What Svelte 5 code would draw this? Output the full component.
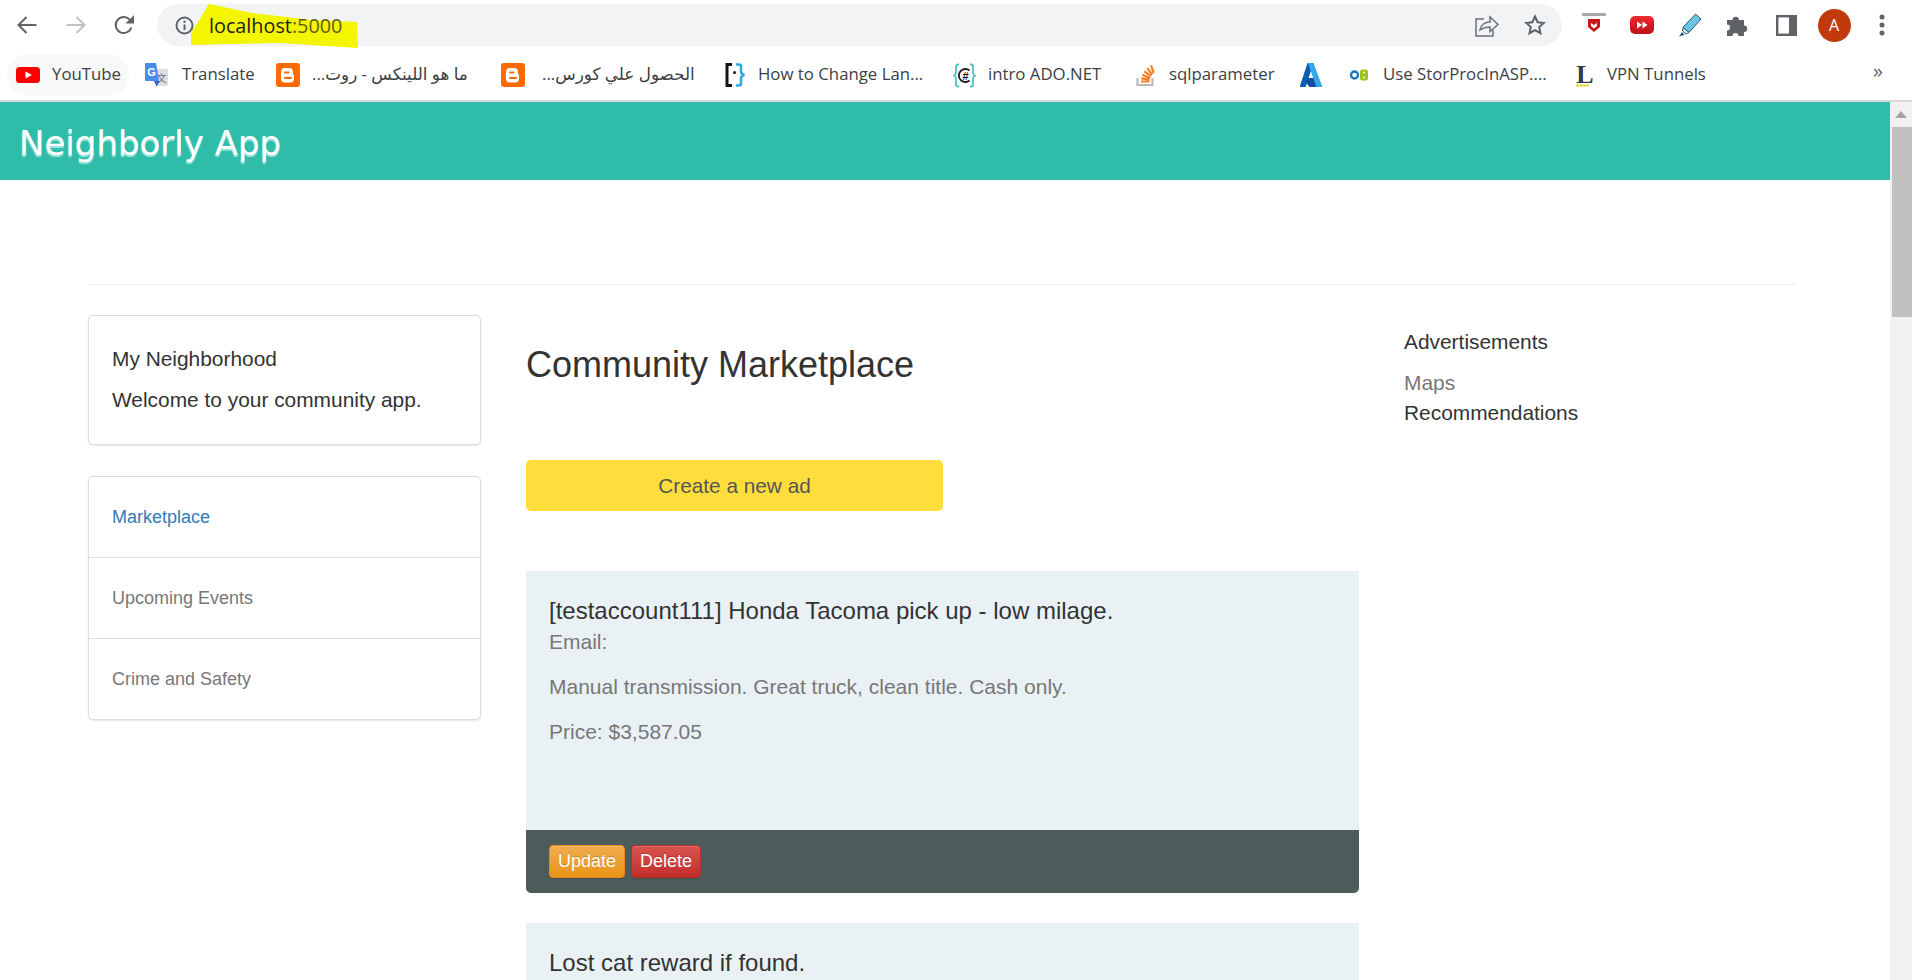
<script>
	const bookmarks = [
		{ icon: 'yt', label: 'YouTube', w: 129, gap: 12 },
		{ icon: 'translate', label: 'Translate', w: 131, gap: 14 },
		{ icon: 'blogger', label: 'ما هو اللينكس - روت...', w: 225, gap: 12 },
		{ icon: 'blogger', label: 'الحصول علي كورس...', w: 224, gap: 17 },
		{ icon: 'bracket', label: 'How to Change Lan...', w: 228, gap: 12 },
		{ icon: 'csharp', label: 'intro ADO.NET', w: 183, gap: 12 },
		{ icon: 'so', label: 'sqlparameter', w: 164, gap: 13 },
		{ icon: 'azure', label: '', w: 50, gap: 0 },
		{ icon: 'ob', label: 'Use StorProcInASP....', w: 225, gap: 15 },
		{ icon: 'lfav', label: 'VPN Tunnels', w: 280, gap: 12 }
	];

	const ads = [
		{
			title: '[testaccount111] Honda Tacoma pick up - low milage.',
			desc: 'Manual transmission. Great truck, clean title. Cash only.',
			price: 'Price: $3,587.05'
		},
		{
			title: 'Lost cat reward if found.',
			desc: '',
			price: ''
		}
	];
</script>

{#snippet favicon(name)}
	{#if name === 'yt'}
		<svg width="24" height="16" viewBox="0 0 24 16"><rect width="24" height="16" rx="3.5" fill="#f00" /><path d="M9.5 4.5 16 8l-6.5 3.5z" fill="#fff" /></svg>
	{:else if name === 'translate'}
		<svg width="23" height="24" viewBox="0 0 23 24">
			<path d="M10 6h12a1 1 0 0 1 1 1v15a1 1 0 0 1-1 1H11z" fill="#dcdfe2" />
			<text x="16.5" y="19" font-size="10" fill="#6b7075" text-anchor="middle" font-family="Noto Sans CJK SC, sans-serif">文</text>
			<path d="M1 0h10l3 18H1a1 1 0 0 1-1-1V1a1 1 0 0 1 1-1z" fill="#4a8af4" />
			<path d="M9 18h6l-3.5 5.500z" fill="#3367c9" />
			<text x="6.500" y="13" font-size="11" font-weight="700" fill="#fff" text-anchor="middle" font-family="Liberation Sans, sans-serif">G</text>
		</svg>
	{:else if name === 'blogger'}
		<svg width="24" height="24" viewBox="0 0 24 24">
			<rect width="24" height="24" rx="3" fill="#ff6a00" />
			<path d="M9 5h4a4 4 0 0 1 4 4v1.500a2 2 0 0 0 1 1.500v3.500a4 4 0 0 1-4 4H9a4 4 0 0 1-4-4V9a4 4 0 0 1 4-4z" fill="#fff" />
			<path d="M9 9.500h3.500M9 15h6" stroke="#ff6a00" stroke-width="2" stroke-linecap="round" />
		</svg>
	{:else if name === 'bracket'}
		<svg width="21" height="24" viewBox="0 0 21 24" fill="none">
			<path d="M7 1.500H2v21h5" stroke="#151515" stroke-width="3" />
			<path d="M11 1.500h3a2 2 0 0 1 2 2v5c0 2 1 3 3.500 3.500-2.500.5-3.500 1.500-3.500 3.500v5a2 2 0 0 1-2 2h-3" stroke="#2ba8e0" stroke-width="2.500" />
			<circle cx="9.500" cy="9.500" r="1.500" fill="#151515" />
		</svg>
	{:else if name === 'csharp'}
		<svg width="23" height="25" viewBox="0 0 23 25" fill="none">
			<path d="M6 1.500H5a2 2 0 0 0-2 2v6c0 1.500-1 2.500-2 3 1 .5 2 1.500 2 3v6a2 2 0 0 0 2 2h1M17 1.500h1a2 2 0 0 1 2 2v6c0 1.500 1 2.500 2 3-1 .5-2 1.500-2 3v6a2 2 0 0 1-2 2h-1" stroke="#4cc0c9" stroke-width="1.800" />
			<path d="M16.500 7.500a6.500 6.500 0 1 0 0 10" stroke="#1c1c1c" stroke-width="1.800" />
			<text x="12.500" y="16.500" font-size="11" font-weight="700" fill="#1c1c1c" text-anchor="middle" font-family="Liberation Sans, sans-serif">#</text>
		</svg>
	{:else if name === 'so'}
		<svg width="20" height="24" viewBox="0 0 20 24" fill="none">
			<path d="M1.500 15v7h15v-7" stroke="#bcbbbb" stroke-width="2.200" />
			<path d="M5 18.500h8.500M5.300 15.300l8.300 1.300M6.300 11.800l7.800 3.200M8.300 8.400l6.800 4.800M11.300 5.200l5 6.300M15 2.300l2.800 7.600" stroke="#f48024" stroke-width="2.200" />
		</svg>
	{:else if name === 'azure'}
		<svg width="22" height="24" viewBox="0 0 22 24">
			<path d="M7.500 0h6L6 23a1 1 0 0 1-1 1H1a1 1 0 0 1-1-1.300z" fill="#0a5fb4" />
			<path d="M16 15H7l-1.500 4 4 5H19z" fill="#0f4f9f" />
			<path d="M13.500 0 22 22.700a1 1 0 0 1-1 1.300h-6a1 1 0 0 0 1-1.300L8 0z" fill="#35a7ea" />
		</svg>
	{:else if name === 'ob'}
		<svg width="18" height="12" viewBox="0 0 18 12">
			<circle cx="4.500" cy="6" r="3.500" fill="none" stroke="#1976c2" stroke-width="2.400" />
			<rect x="10" y="0.500" width="8" height="11" rx="2.500" fill="#9dc41a" />
			<path d="M13 3.500h2M13 8.500h2" stroke="#fff" stroke-width="1.400" />
		</svg>
	{:else if name === 'lfav'}
		<svg width="20" height="24" viewBox="0 0 20 24">
			<text x="10" y="20" font-size="26" font-weight="700" fill="#2f3e46" text-anchor="middle" font-family="Liberation Serif, serif">L</text>
			<rect x="1" y="21.500" width="13" height="2" fill="#e8d83a" />
		</svg>
	{/if}
{/snippet}

<div class="page">
	<header class="chrome">
		<div class="toolbar">
			<div class="btns">
				<span class="tb">
					<svg width="20" height="18" viewBox="0 0 20 18" fill="none" stroke="#5f6368" stroke-width="2"><path d="M19.500 9H2M9.500 1 1.500 9l8 8" /></svg>
				</span>
				<span class="tb">
					<svg width="20" height="18" viewBox="0 0 20 18" fill="none" stroke="#bdc1c6" stroke-width="2"><path d="M.5 9H18M10.500 1l8 8-8 8" /></svg>
				</span>
				<span class="tb">
					<svg width="21" height="20" viewBox="0 0 21 20" fill="none"><path d="M17.300 12.500a8 8 0 1 1-1.600-7.800" stroke="#5f6368" stroke-width="2" /><path d="M20 0v8.500h-8.500z" fill="#5f6368" /></svg>
				</span>
			</div>

			<div class="omnibox">
				<svg class="marker" width="180" height="46" viewBox="0 0 180 46"><path d="M1 41V29L19 0l43 9 60 7 45 2 1 26-78-5-50 1z" fill="#f4f500" /></svg>
				<svg class="info" width="19" height="19" viewBox="0 0 19 19" fill="none"><circle cx="9.500" cy="9.500" r="8" stroke="#5f6368" stroke-width="2" /><path d="M9.500 8.500v5.500" stroke="#5f6368" stroke-width="2" /><circle cx="9.500" cy="5.700" r="1.200" fill="#5f6368" /></svg>
				<span class="url">localhost<span class="port">:5000</span></span>
				<span class="omni-right">
					<svg width="24" height="23" viewBox="0 0 24 23" fill="none" stroke="#6b6f73" stroke-width="1.500"><path d="M9 5H1v17h17v-6" /><path d="M5 16c1-5 5-8 10-8V3l8 7.500-8 7V13c-4 0-7 1-10 3z" /></svg>
					<svg width="22" height="22" viewBox="0 0 22 22" fill="none" stroke="#5f6368" stroke-width="2"><path d="m11 2.500 2.600 5.700 6.200.7-4.600 4.200 1.300 6.100-5.500-3.100-5.500 3.100 1.300-6.100L2.200 8.900l6.200-.7z" /></svg>
				</span>
			</div>

			<div class="btns ext">
				<span class="tb">
					<svg width="24" height="24" viewBox="0 0 24 24"><rect width="24" height="3" rx="1" fill="#a9a9a9" /><path d="M6 6h12v8l-6 5-6-5z" fill="#c8171d" /><path d="M9 10l3 2 3-2v3l-3 2.500L9 13z" fill="#fff" /></svg>
				</span>
				<span class="tb">
					<svg width="24" height="18" viewBox="0 0 24 18"><defs><linearGradient id="ff" x1="0" y1="0" x2="0" y2="1"><stop offset="0" stop-color="#ee2a2f" /><stop offset="1" stop-color="#bf1016" /></linearGradient></defs><rect width="24" height="18" rx="5" fill="url(#ff)" /><path d="M7 5.500 12 9l-5 3.500zM12.500 5.500 17.500 9l-5 3.500z" fill="#fff" /></svg>
				</span>
				<span class="tb">
					<svg width="24" height="24" viewBox="0 0 24 24"><path d="M17.500 1 23 6 11 19.500l-6-5z" fill="#6cc4e4" stroke="#2b5a70" stroke-width="1" /><path d="M5 14.500l6 5-3 1.500-3.500-3z" fill="#d7ecf4" stroke="#2b5a70" stroke-width="1" /><path d="M4 19 1 23.500l5.500-1.500z" fill="#2b5a70" /></svg>
				</span>
				<span class="tb">
					<svg width="23" height="22" viewBox="0 0 23 22"><path d="M0 6h5.500a3.200 3.200 0 1 1 6.400 0H17v5.500a3.200 3.200 0 1 1 0 6.400V22h-5.500a3 3 0 0 0-6 0H0v-5.500a3 3 0 0 0 0-6z" fill="#5f6368" /></svg>
				</span>
				<span class="tb">
					<svg width="21" height="21" viewBox="0 0 21 21"><rect x="1.200" y="1.200" width="18.600" height="18.600" fill="none" stroke="#5f6368" stroke-width="2.400" /><rect x="13" y="1" width="7" height="19" fill="#5f6368" /></svg>
				</span>
				<span class="tb"><span class="avatar">A</span></span>
				<span class="tb">
					<svg width="6" height="22" viewBox="0 0 6 22" fill="#5f6368"><circle cx="3" cy="3" r="2.500" /><circle cx="3" cy="11" r="2.500" /><circle cx="3" cy="19" r="2.500" /></svg>
				</span>
			</div>
		</div>

		<nav class="bookmarks">
			{#each bookmarks as b}
				<div class="bookmark" class:pill={b.icon === 'yt'} style="width: {b.w}px; gap: {b.gap}px">
					{@render favicon(b.icon)}
					{#if b.label}<span dir="auto">{b.label}</span>{/if}
				</div>
			{/each}
			<span class="more">»</span>
		</nav>
	</header>

	<div class="viewport">
		<div class="site">
			<div class="banner"><h1>Neighborly App</h1></div>

			<div class="container">
				<hr />
				<div class="columns">
					<aside class="left">
						<div class="card intro">
							<p>My Neighborhood</p>
							<p>Welcome to your community app.</p>
						</div>
						<ul class="card menu">
							<li class="active">Marketplace</li>
							<li>Upcoming Events</li>
							<li>Crime and Safety</li>
						</ul>
					</aside>

					<main class="center">
						<h2>Community Marketplace</h2>
						<div class="create">Create a new ad</div>

						{#each ads as ad, i}
							<article class="ad">
								<div class="ad-body">
									<h3>{ad.title}</h3>
									{#if ad.desc}
										<p class="email">Email:</p>
										<p>{ad.desc}</p>
										<p>{ad.price}</p>
									{/if}
								</div>
								{#if i === 0}
									<div class="ad-foot">
										<span class="btn orange">Update</span>
										<span class="btn red">Delete</span>
									</div>
								{/if}
							</article>
						{/each}
					</main>

					<aside class="right">
						<p class="ads-title">Advertisements</p>
						<p class="muted">Maps</p>
						<p>Recommendations</p>
					</aside>
				</div>
			</div>
		</div>

		<div class="scrollbar">
			<div class="arrow"></div>
			<div class="thumb"></div>
		</div>
	</div>
</div>

<style>
	:global(body) {
		margin: 0;
		background: #fff;
	}

	.page {
		height: 980px;
		overflow: hidden;
		display: flex;
		flex-direction: column;
		font-family: 'Liberation Sans', Arial, sans-serif;
		color: #333;
	}

	.chrome {
		background: #fff;
		flex: none;
	}

	.toolbar {
		height: 50px;
		display: flex;
		align-items: center;
		padding: 0 6px 0 3px;
	}

	.btns {
		display: flex;
		flex: none;
	}

	.tb {
		width: 48.500px;
		height: 40px;
		display: flex;
		align-items: center;
		justify-content: center;
	}

	.ext .tb {
		width: 48px;
	}

	.omnibox {
		flex: 1;
		height: 42px;
		margin: 0 8px 0 8.500px;
		border-radius: 21px;
		background: #f1f3f4;
		position: relative;
		display: flex;
		align-items: center;
		padding: 0 16px 0 18px;
	}

	.marker {
		position: absolute;
		left: 33px;
		top: 0;
		overflow: visible;
	}

	.info,
	.url {
		position: relative;
	}

	.url {
		margin-left: 15px;
		font-family: 'Open Sans', sans-serif;
		font-size: 19.800px;
		color: #202124;
	}

	.port {
		color: #5d6010;
	}

	.omni-right {
		margin-left: auto;
		display: flex;
		align-items: center;
		gap: 25px;
	}

	.avatar {
		width: 33px;
		height: 33px;
		border-radius: 50%;
		background: #c23a0c;
		color: #fff;
		font-family: 'Open Sans', sans-serif;
		font-size: 16px;
		display: flex;
		align-items: center;
		justify-content: center;
	}

	.bookmarks {
		height: 50px;
		border-bottom: 2px solid #d9dadb;
		display: flex;
		align-items: center;
		padding-left: 16px;
		position: relative;
		font-family: 'Open Sans', 'DejaVu Sans', sans-serif;
		font-size: 16.800px;
		color: #3c4043;
	}

	.bookmark {
		flex: none;
		height: 42px;
		display: flex;
		align-items: center;
		white-space: nowrap;
		position: relative;
	}

	.bookmark > span {
		position: relative;
		top: -2px;
	}

	.bookmark :global(svg) {
		flex: none;
		position: relative;
	}

	.pill::before {
		content: '';
		position: absolute;
		left: -9px;
		top: 0;
		width: 122px;
		height: 42px;
		border-radius: 21px;
		background: #f8f9fa;
	}

	.more {
		position: absolute;
		left: 1873px;
		top: 7px;
		font-size: 20px;
		color: #5f6368;
	}

	.viewport {
		flex: 1;
		min-height: 0;
		display: flex;
	}

	.site {
		flex: 1;
		min-width: 0;
	}

	.scrollbar {
		width: 22px;
		flex: none;
		background: #f1f1f1;
	}

	.arrow {
		height: 25px;
		position: relative;
	}

	.arrow::after {
		content: '';
		position: absolute;
		left: 5px;
		top: 9px;
		border: 6px solid transparent;
		border-top: 0;
		border-bottom: 7px solid #a3a3a3;
	}

	.thumb {
		height: 190px;
		margin-left: 2px;
		background: #c1c1c1;
	}

	.banner {
		height: 78px;
		background: #2fbdaa;
		display: flex;
		align-items: center;
		padding: 3px 0 0 19px;
		box-sizing: border-box;
	}

	h1 {
		margin: 0;
		font-family: 'DejaVu Sans', sans-serif;
		font-weight: 400;
		font-size: 34px;
		color: #fff;
		text-shadow: 0 2px 1px rgba(190, 240, 235, 0.8);
	}

	.container {
		padding: 0 93px 0 88px;
	}

	hr {
		margin: 104px 0 30px;
		border: 0;
		border-top: 1px solid #eee;
	}

	.columns {
		display: flex;
	}

	.left {
		width: 393px;
		flex: none;
		display: flex;
		flex-direction: column;
		gap: 31px;
	}

	.card {
		box-sizing: border-box;
		background: #fff;
		border: 1px solid #ddd;
		border-radius: 5px;
		box-shadow: 0 1px 2px rgba(0, 0, 0, 0.1);
		margin: 0;
	}

	.intro {
		height: 130px;
		padding: 29px 23px 0;
		font-size: 20.900px;
	}

	.intro p {
		margin: 0 0 13px;
		line-height: 28px;
	}

	.menu {
		list-style: none;
		padding: 0;
		height: 244px;
		display: flex;
		flex-direction: column;
	}

	.menu li {
		flex: 1;
		display: flex;
		align-items: center;
		padding-left: 23px;
		font-size: 18px;
		color: #777;
	}

	.menu li + li {
		border-top: 1px solid #ddd;
	}

	.menu .active {
		color: #337ab7;
	}

	.center {
		width: 833px;
		flex: none;
		margin-left: 45px;
	}

	h2 {
		margin: 30px 0 75px;
		font-weight: 400;
		font-size: 36px;
		line-height: 40px;
		color: #333;
	}

	.create {
		width: 417px;
		height: 51px;
		border-radius: 5px;
		background: #ffdd3c;
		color: #555;
		font-size: 20.800px;
		display: flex;
		align-items: center;
		justify-content: center;
		margin-bottom: 60px;
	}

	.ad {
		margin-bottom: 30px;
		background: #eaf1f5;
		border-radius: 0 0 5px 5px;
	}

	.ad-body {
		padding: 25px 23px 0;
		min-height: 234px;
		font-size: 21px;
		color: #777;
	}

	h3 {
		margin: 0 0 2px;
		font-weight: 400;
		font-size: 24px;
		line-height: 30px;
		color: #333;
	}

	.ad-body p {
		margin: 0 0 17px;
		line-height: 28px;
	}

	.ad-foot {
		height: 63px;
		box-sizing: border-box;
		background: #4d5b5b;
		border-radius: 0 0 5px 5px;
		padding: 15px 23px 0;
		display: flex;
		gap: 6px;
		align-items: flex-start;
	}

	.btn {
		height: 33px;
		padding: 0 8px;
		box-sizing: border-box;
		border-radius: 4px;
		color: #fff;
		font-size: 18px;
		display: flex;
		align-items: center;
		text-shadow: 0 -1px 0 rgba(0, 0, 0, 0.2);
		box-shadow: inset 0 1px 0 rgba(255, 255, 255, 0.15), 0 1px 1px rgba(0, 0, 0, 0.1);
	}

	.orange {
		background: linear-gradient(#f0ad4e, #eb9316);
		border: 1px solid #e38d13;
	}

	.red {
		background: linear-gradient(#d9534f, #c12e2a);
		border: 1px solid #b92c28;
	}

	.right {
		margin-left: 45px;
		padding-top: 12px;
		font-size: 20.900px;
		color: #333;
	}

	.right p {
		margin: 0;
		line-height: 30px;
		white-space: nowrap;
	}

	.right .ads-title {
		margin-bottom: 11px;
	}

	.right .muted {
		color: #777;
	}
</style>
